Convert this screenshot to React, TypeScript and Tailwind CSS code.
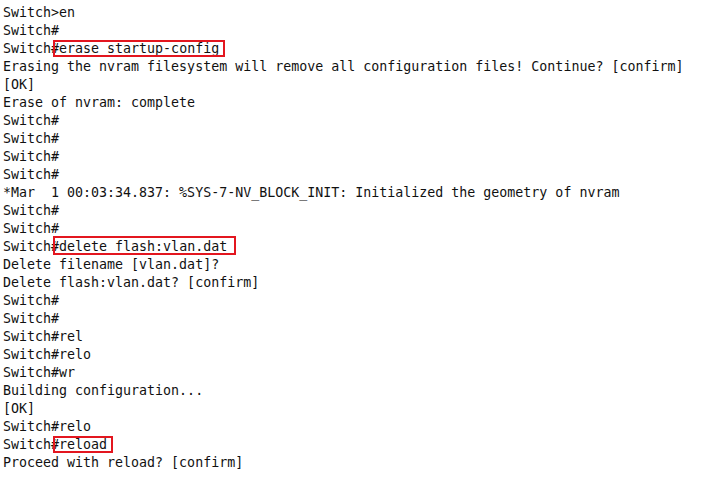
const lines: { pre: string; cmd?: string; box?: string }[] = [
  { pre: "Switch>en" },
  { pre: "Switch#" },
  { pre: "Switch#", cmd: "erase startup-config", box: "left-[-6px] right-[-6px] top-[-1px] bottom-[-1px]" },
  { pre: "Erasing the nvram filesystem will remove all configuration files! Continue? [confirm]" },
  { pre: "[OK]" },
  { pre: "Erase of nvram: complete" },
  { pre: "Switch#" },
  { pre: "Switch#" },
  { pre: "Switch#" },
  { pre: "Switch#" },
  { pre: "*Mar  1 00:03:34.837: %SYS-7-NV_BLOCK_INIT: Initialized the geometry of nvram" },
  { pre: "Switch#" },
  { pre: "Switch#" },
  { pre: "Switch#", cmd: "delete flash:vlan.dat", box: "left-[-6px] right-[-9px] top-[-3px] bottom-[-1px]" },
  { pre: "Delete filename [vlan.dat]?" },
  { pre: "Delete flash:vlan.dat? [confirm]" },
  { pre: "Switch#" },
  { pre: "Switch#" },
  { pre: "Switch#rel" },
  { pre: "Switch#relo" },
  { pre: "Switch#wr" },
  { pre: "Building configuration..." },
  { pre: "[OK]" },
  { pre: "Switch#relo" },
  { pre: "Switch#", cmd: "reload", box: "left-[-6px] right-[-6px] top-[-1px] bottom-[-1px]" },
  { pre: "Proceed with reload? [confirm]" },
];

export default function App() {
  return (
    <div className="w-[702px] h-[482px] bg-white overflow-hidden pt-[4px] pl-[3px] font-['DejaVu_Sans_Mono',monospace] text-[13.3px] leading-[18px] text-[#111111]">
      {lines.map((l, i) => (
        <div key={i} className="whitespace-pre h-[18px]">
          {l.pre}
          {l.cmd && (
            <span className="relative">
              {l.cmd}
              <span className={`absolute border-2 border-[#e3161f] ${l.box}`} />
            </span>
          )}
        </div>
      ))}
    </div>
  );
}
